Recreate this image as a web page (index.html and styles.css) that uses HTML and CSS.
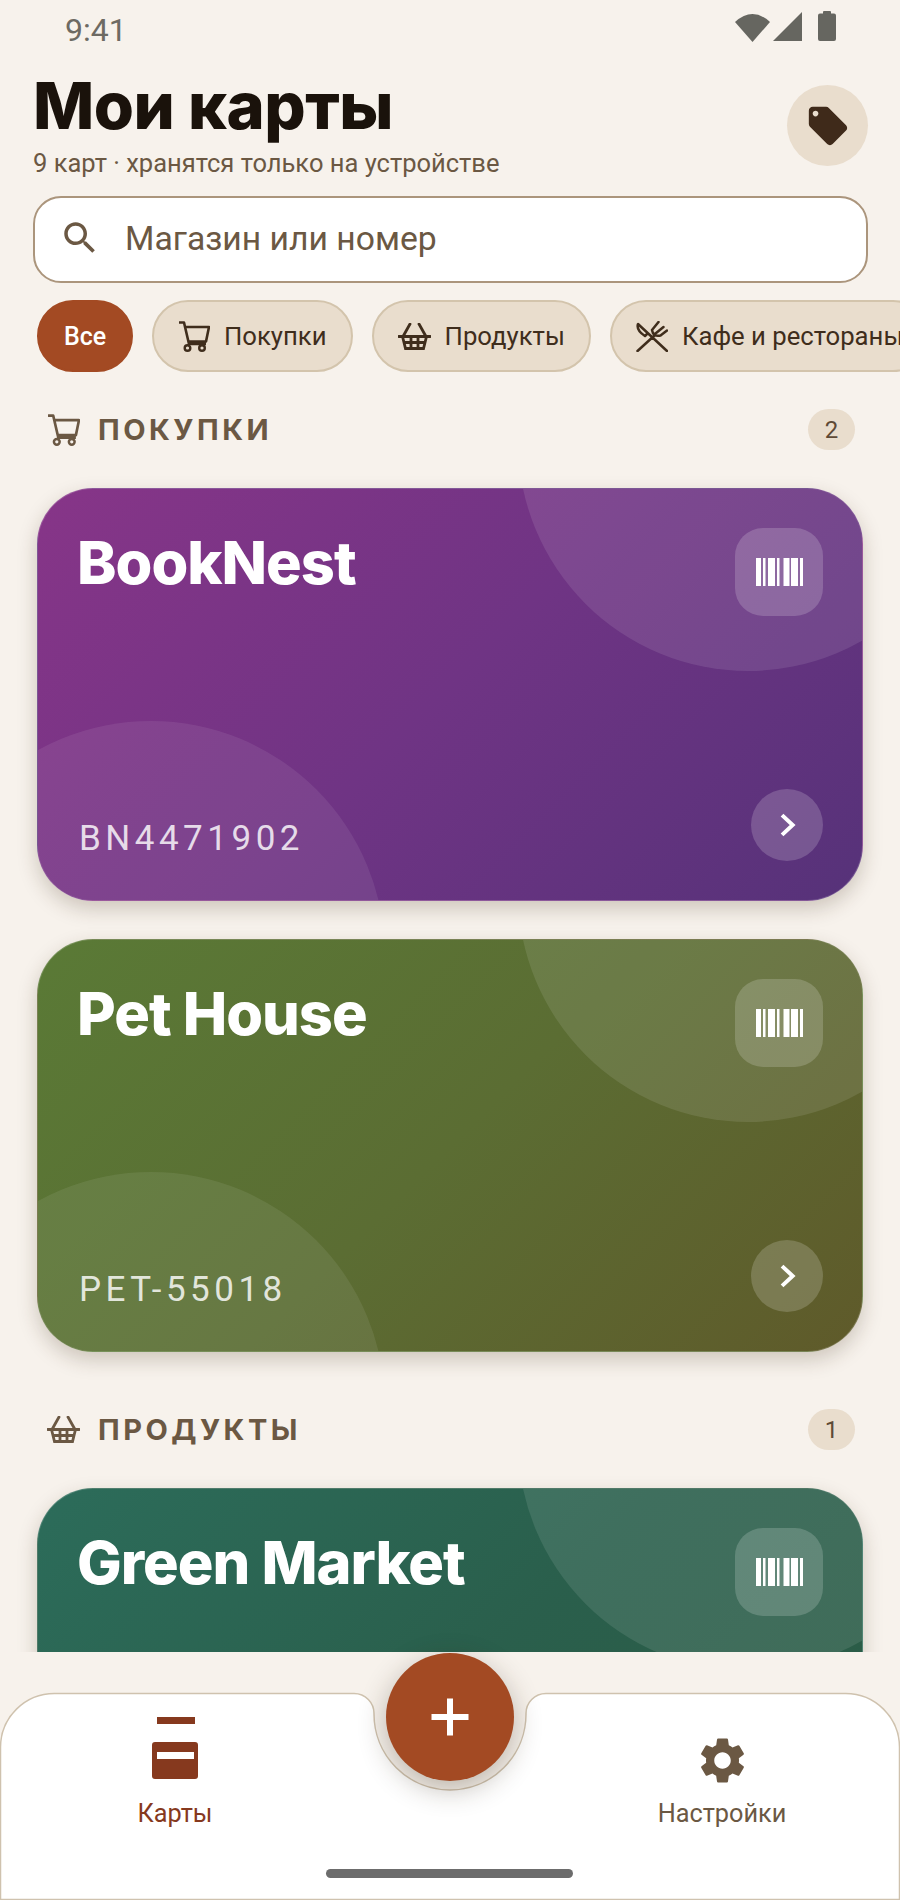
FILE: index.html
```html
<!DOCTYPE html>
<html lang="ru">
<head>
    <meta charset="UTF-8">
    <meta name="viewport" content="width=device-width, initial-scale=1.0">
    <title>Мои карты</title>
    <link rel="stylesheet" href="styles.css">
</head>
<body>
    <svg class="icon-defs" width="0" height="0">
        <symbol id="cart" viewBox="0 0 32 31">
            <path d="M1 1.500h5L11 23h17M7 6h24l-3 14.500H10" fill="none" stroke="currentColor" stroke-width="2.600" stroke-linejoin="round"/>
            <circle cx="9.500" cy="27" r="2.800" fill="none" stroke="currentColor" stroke-width="2.400"/>
            <circle cx="24" cy="27" r="2.800" fill="none" stroke="currentColor" stroke-width="2.400"/>
        </symbol>
        <symbol id="basket" viewBox="0 0 33 27">
            <path d="M0.500 13.500h32M12 1L5 13.500M21 1L28 13.500M4.500 13.500l3 12h18l3-12M13 13.500v12M20 13.500v12M6 19.500h21" fill="none" stroke="currentColor" stroke-width="2.800" stroke-linecap="round"/>
        </symbol>
        <symbol id="barcode" viewBox="0 0 47 28">
            <path d="M0 0h5v28H0zM7 0h2.500v28H7zM12 0h7v28h-7zM21 0h2.500v28H21zM27.500 0h6v28h-6zM35 0h7v28h-7zM44 0h3v28h-3z" fill="#fff"/>
        </symbol>
        <symbol id="chevron" viewBox="0 0 24 24">
            <path d="M8.500 5l7.500 7-7.500 7" fill="none" stroke="#fff" stroke-width="2.800"/>
        </symbol>
    </svg>

    <div class="phone">
        <div class="status-bar">
            <span class="status-time">9:41</span>
            <div class="status-icons">
                <svg width="35" height="30" viewBox="0 0 35 30"><path d="M0 10Q17.500-6 35 10L17.500 30z" fill="#666660"/></svg>
                <svg width="29" height="29" viewBox="0 0 29 29"><path d="M29 0v29H0z" fill="#666660"/></svg>
                <svg class="status-battery" width="18" height="30" viewBox="0 0 18 30"><path d="M5 2.500V1q0-1 1-1h6q1 0 1 1v1.500h3q2 0 2 2V28q0 2-2 2H2q-2 0-2-2V4.500q0-2 2-2z" fill="#666660"/></svg>
            </div>
        </div>

        <header class="page-head">
            <div>
                <h1>Мои карты</h1>
                <p class="subtitle">9 карт · хранятся только на устройстве</p>
            </div>
            <button class="tag-btn">
                <svg width="46" height="46" viewBox="0 0 24 24"><path d="M21.410 11.580l-9-9C12.050 2.220 11.550 2 11 2H4c-1.100 0-2 .9-2 2v7c0 .55.22 1.050.59 1.420l9 9c.36.36.86.58 1.410.58.55 0 1.050-.22 1.410-.59l7-7c.37-.36.59-.86.59-1.410 0-.55-.23-1.060-.59-1.420zM5.500 7C4.670 7 4 6.330 4 5.500S4.670 4 5.500 4 7 4.670 7 5.500 6.330 7 5.500 7z" fill="#3f2a1a"/></svg>
            </button>
        </header>

        <div class="search">
            <svg width="42" height="42" viewBox="0 0 24 24"><path d="M15.500 14h-.79l-.28-.27C15.410 12.590 16 11.110 16 9.500 16 5.910 13.090 3 9.500 3S3 5.910 3 9.500 5.910 16 9.500 16c1.610 0 3.090-.59 4.230-1.570l.27.28v.79l5 4.990L20.490 19l-4.990-5zm-6 0C7.010 14 5 11.990 5 9.500S7.010 5 9.500 5 14 7.010 14 9.500 11.990 14 9.500 14z" fill="#6b5843"/></svg>
            <span>Магазин или номер</span>
        </div>

        <div class="chips">
            <span class="chip chip-active">Все</span>
            <span class="chip"><svg class="chip-icon" width="32" height="31"><use href="#cart"/></svg>Покупки</span>
            <span class="chip"><svg class="chip-icon" width="33" height="27"><use href="#basket"/></svg>Продукты</span>
            <span class="chip">
                <svg class="chip-icon" width="32" height="31" viewBox="0 0 32 31">
                    <path d="M1.500 30L19 14M16 9Q17 16 24.500 14.500M16 9l6.500-8M19.500 12.500L27.500 6M24.500 14.500L31 9.500M31 30L2 3Q0 9 9 15l2.500-2.500" fill="none" stroke="currentColor" stroke-width="2.500" stroke-linecap="round" stroke-linejoin="round"/>
                </svg>Кафе и рестораны</span>
        </div>

        <main class="card-list">
            <div class="section-head">
                <svg width="33" height="32"><use href="#cart"/></svg>
                <h2>Покупки</h2>
                <span class="count">2</span>
            </div>

            <article class="card card-purple">
                <div class="card-row">
                    <h3>BookNest</h3>
                    <span class="barcode-btn"><svg width="47" height="28"><use href="#barcode"/></svg></span>
                </div>
                <div class="card-row card-row-end">
                    <span class="card-number">BN4471902</span>
                    <span class="open-btn"><svg width="34" height="34"><use href="#chevron"/></svg></span>
                </div>
            </article>

            <article class="card card-olive">
                <div class="card-row">
                    <h3>Pet House</h3>
                    <span class="barcode-btn"><svg width="47" height="28"><use href="#barcode"/></svg></span>
                </div>
                <div class="card-row card-row-end">
                    <span class="card-number">PET-55018</span>
                    <span class="open-btn"><svg width="34" height="34"><use href="#chevron"/></svg></span>
                </div>
            </article>

            <div class="section-head section-head-next">
                <svg width="33" height="27"><use href="#basket"/></svg>
                <h2>Продукты</h2>
                <span class="count">1</span>
            </div>

            <article class="card card-green">
                <div class="card-row">
                    <h3>Green Market</h3>
                    <span class="barcode-btn"><svg width="47" height="28"><use href="#barcode"/></svg></span>
                </div>
            </article>
        </main>

        <nav class="bottom-nav">
            <svg class="nav-shape" width="900" height="208" viewBox="0 0 900 208">
                <path d="M.5 207.500V55A54 54 0 0 1 54.500 1.500H354A20 20 0 0 1 374 22A76 76 0 0 0 526 22A20 20 0 0 1 546 1.500H845.500A54 54 0 0 1 899.500 55V207.500z" fill="#fff" stroke="#cfc2ae" stroke-width="1.500"/>
            </svg>
            <button class="fab">
                <svg width="44" height="44" viewBox="0 0 44 44"><path d="M22 3.500v37M3.500 22h37" stroke="#fff" stroke-width="6"/></svg>
            </button>
            <a class="nav-item nav-item-active">
                <svg width="46" height="62" viewBox="0 0 46 62"><path d="M5 0h38v7H5zM3 25h40q3 0 3 3v31q0 3-3 3H3q-3 0-3-3V28q0-3 3-3zM5 35v7h37v-7z" fill="#86391e" fill-rule="evenodd"/></svg>
                Карты
            </a>
            <a class="nav-item nav-item-settings">
                <svg width="55" height="55" viewBox="0 0 24 24"><path d="M19.140 12.940c.04-.3.06-.61.06-.94 0-.32-.02-.64-.07-.94l2.030-1.580c.18-.14.23-.41.12-.61l-1.920-3.320c-.12-.22-.37-.29-.59-.22l-2.390.96c-.5-.38-1.030-.7-1.620-.94l-.36-2.540c-.04-.24-.24-.41-.48-.41h-3.840c-.24 0-.43.17-.47.41l-.36 2.540c-.59.24-1.130.57-1.620.94l-2.390-.96c-.22-.08-.47 0-.59.22L2.740 8.870c-.12.21-.08.47.12.61l2.030 1.580c-.05.3-.09.63-.09.94s.02.64.07.94l-2.030 1.580c-.18.14-.23.41-.12.61l1.920 3.320c.12.22.37.29.59.22l2.390-.96c.5.38 1.030.7 1.620.94l.36 2.540c.05.24.24.41.48.41h3.840c.24 0 .44-.17.47-.41l.36-2.540c.59-.24 1.130-.56 1.620-.94l2.390.96c.22.08.47 0 .59-.22l1.920-3.320c.12-.22.07-.47-.12-.61l-2.010-1.580zM12 15.600c-1.980 0-3.600-1.620-3.600-3.600s1.620-3.600 3.600-3.600 3.600 1.620 3.600 3.600-1.620 3.600-3.600 3.600z" fill="#6b5843"/></svg>
                Настройки
            </a>
            <span class="home-bar"></span>
        </nav>
    </div>
</body>
</html>
```

FILE: styles.css
```css
* {
    box-sizing: border-box;
}
html, body {
    margin: 0;
    height: 100%;
}
body {
    font-family: Roboto, "Noto Sans", sans-serif;
    background: #f7f2ec;
    color: #3f2d1c;
}
button {
    border: none;
    padding: 0;
    cursor: pointer;
}
.icon-defs {
    position: absolute;
}
.phone {
    width: 900px;
    height: 1900px;
    display: flex;
    flex-direction: column;
    overflow: hidden;
}

/* status bar */
.status-bar {
    height: 62px;
    padding: 12px 64px 0 65px;
    display: flex;
    justify-content: space-between;
    align-items: flex-start;
}
.status-time {
    font-size: 32px;
    line-height: 36px;
    color: #6d6a63;
}
.status-icons {
    display: flex;
    align-items: flex-start;
    gap: 3px;
}
.status-battery {
    margin-left: 13px;
    margin-top: -1px;
}

/* header */
.page-head {
    height: 120px;
    padding: 0 32px 0 33px;
    display: flex;
    justify-content: space-between;
    align-items: flex-start;
}
h1 {
    margin: 11px 0 0;
    font-family: Inter, sans-serif;
    font-size: 65px;
    line-height: 66px;
    font-weight: 800;
    letter-spacing: -0.5px;
    color: #1a120b;
}
.subtitle {
    margin: 8px 0 0;
    font-size: 25.5px;
    line-height: 32px;
    color: #6b5843;
}
.tag-btn {
    width: 81px;
    height: 81px;
    margin-top: 23px;
    border-radius: 50%;
    background: #e9ddcd;
    display: flex;
    align-items: center;
    justify-content: center;
}
.search {
    height: 87px;
    margin: 14px 32px 0 33px;
    padding: 0 0 3px 24px;
    background: #fff;
    border: 2px solid #ab957c;
    border-radius: 28px;
    display: flex;
    align-items: center;
    gap: 24px;
    font-size: 33.7px;
    color: #6b5843;
}

/* filter chips */
.chips {
    margin-top: 17px;
    padding-left: 37px;
    display: flex;
    gap: 19px;
}
.chip {
    height: 72px;
    padding: 0 24px 0 24px;
    flex-shrink: 0;
    display: flex;
    align-items: center;
    gap: 14px;
    font-size: 25.7px;
    background: #e9ddcd;
    border: 2px solid #d3c4ac;
    border-radius: 36px;
    white-space: nowrap;
}
.chip-active {
    width: 96px;
    padding: 0;
    justify-content: center;
    background: #a34a23;
    border-color: #a34a23;
    color: #fff;
    font-weight: 500;
    font-size: 25px;
}

/* card list */
.card-list {
    height: 1280px;
    padding: 37px 37px 0;
    overflow: hidden;
}
.section-head {
    height: 41px;
    margin-bottom: 38px;
    padding: 0 8px 0 10px;
    display: flex;
    align-items: center;
    gap: 18px;
    color: #6b5843;
}
.section-head-next {
    margin-top: 57px;
}
h2 {
    margin: 0;
    flex: 1;
    font-family: Inter, sans-serif;
    font-size: 29px;
    font-weight: 700;
    letter-spacing: 3.5px;
    text-transform: uppercase;
}
.count {
    min-width: 47px;
    height: 41px;
    border-radius: 21px;
    background: #e9ddcd;
    color: #5e4a36;
    font-size: 24px;
    display: flex;
    align-items: center;
    justify-content: center;
}

.card {
    position: relative;
    height: 413px;
    margin-bottom: 38px;
    padding: 39px;
    border-radius: 56px;
    border: 1px solid rgba(255, 255, 255, 0.18);
    box-shadow: 0 8px 20px rgba(60, 40, 20, 0.22);
    overflow: hidden;
    display: flex;
    flex-direction: column;
    justify-content: space-between;
    color: #fff;
}
.card::before, .card::after {
    content: "";
    position: absolute;
    border-radius: 50%;
    background: rgba(255, 255, 255, 0.1);
}
.card::before {
    width: 460px;
    height: 460px;
    top: -278px;
    left: 480px;
}
.card::after {
    width: 468px;
    height: 468px;
    top: 232px;
    left: -121px;
    background: rgba(255, 255, 255, 0.08);
}
.card-purple {
    background: linear-gradient(135deg, #873588, #6f3484 50%, #563279);
}
.card-olive {
    background: linear-gradient(135deg, #5a7a36, #5b6d33 50%, #5f5a2a);
}
.card-green {
    background: linear-gradient(135deg, #2c6c5a, #2a5f4c 50%, #2b5a44);
}
.card-row {
    position: relative;
    z-index: 1;
    display: flex;
    justify-content: space-between;
    align-items: flex-start;
}
.card-row-end {
    align-items: center;
}
h3 {
    margin: 0;
    font-family: Inter, sans-serif;
    font-size: 59.5px;
    line-height: 68px;
    font-weight: 800;
    letter-spacing: -1px;
}
.barcode-btn {
    width: 88px;
    height: 88px;
    border-radius: 28px;
    background: rgba(255, 255, 255, 0.18);
    display: flex;
    align-items: center;
    justify-content: center;
}
.card-number {
    margin: 26px 0 0 2px;
    font-size: 35px;
    letter-spacing: 4.500px;
    color: rgba(255, 255, 255, 0.82);
}
.open-btn {
    width: 72px;
    height: 72px;
    border-radius: 50%;
    background: rgba(255, 255, 255, 0.18);
    display: flex;
    align-items: center;
    justify-content: center;
}

/* bottom nav */
.bottom-nav {
    position: relative;
    flex: 1;
    padding: 65px 0 0;
    display: flex;
    justify-content: space-between;
}
.nav-shape {
    position: absolute;
    left: 0;
    bottom: 0;
}
.fab {
    position: absolute;
    left: 386px;
    top: 1px;
    width: 128px;
    height: 128px;
    border-radius: 50%;
    background: #a34a23;
    box-shadow: 0 8px 28px rgba(50, 35, 20, 0.3);
    display: flex;
    align-items: center;
    justify-content: center;
    z-index: 2;
}
.nav-item {
    position: relative;
    width: 350px;
    height: 111px;
    display: flex;
    flex-direction: column;
    align-items: center;
    justify-content: flex-end;
    font-size: 25.300px;
    line-height: 28px;
    color: #86391e;
}
.nav-item-settings {
    margin-right: 3px;
    color: #6b5843;
}
.nav-item svg {
    margin-bottom: auto;
}
.nav-item-settings svg {
    margin-top: 16px;
}
.home-bar {
    position: absolute;
    left: 326px;
    bottom: 22px;
    width: 247px;
    height: 9px;
    border-radius: 5px;
    background: #6c6c6c;
}
```
